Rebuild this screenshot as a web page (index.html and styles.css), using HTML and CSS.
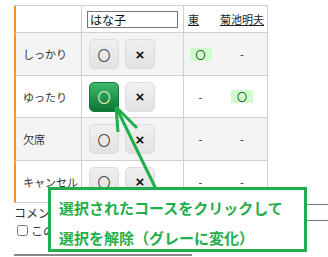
FILE: index.html
```html
<!DOCTYPE html>
<html lang="ja">
<head>
<meta charset="utf-8">
<link rel="stylesheet" href="styles.css">
</head>
<body>
<div class="page">
  <div class="grid">
    <div class="cell c1"></div>
    <div class="cell c2"><input class="name" type="text" value="はな子"></div>
    <div class="cell c3 head"><a href="#">東</a></div>
    <div class="cell c4 head"><a href="#">菊池明夫</a></div>

    <div class="cell c1 alt">しっかり</div>
    <div class="cell c2 alt"><span class="btn">〇</span><span class="btn x">×</span></div>
    <div class="cell c3 alt res"><span class="ok">〇</span></div>
    <div class="cell c4 alt res">-</div>

    <div class="cell c1">ゆったり</div>
    <div class="cell c2"><span class="btn on">〇</span><span class="btn x">×</span></div>
    <div class="cell c3 res">-</div>
    <div class="cell c4 res"><span class="ok">〇</span></div>

    <div class="cell c1 alt">欠席</div>
    <div class="cell c2 alt"><span class="btn">〇</span><span class="btn x">×</span></div>
    <div class="cell c3 alt res">-</div>
    <div class="cell c4 alt res">-</div>

    <div class="cell c1">キャンセル</div>
    <div class="cell c2"><span class="btn">〇</span><span class="btn x">×</span></div>
    <div class="cell c3 res">-</div>
    <div class="cell c4 res">-</div>
  </div>
  <div class="comment"><span class="lbl">コメント</span><input class="cinput" type="text"></div>
  <label class="check"><input type="checkbox">この</label>
  <div class="rule"></div>
</div>

<svg class="arrow" width="328" height="257" viewBox="0 0 328 257">
  <g stroke="#1fae4b" stroke-width="3" fill="none">
    <line x1="116" y1="107" x2="156" y2="189"/>
    <line x1="116" y1="107" x2="118" y2="132"/>
    <line x1="116" y1="107" x2="137" y2="128"/>
  </g>
</svg>
<div class="callout">
  <div>選択されたコースをクリックして</div>
  <div>選択を解除（グレーに変化）</div>
</div>
</body>
</html>
```
FILE: styles.css
```css
* { box-sizing: border-box; }
html, body {
  margin: 0;
  padding: 0;
  background: #fff;
  width: 328px;
  height: 257px;
  overflow: hidden;
  font-family: "Noto Sans CJK JP", "Noto Sans", sans-serif;
  color: #333;
  position: relative;
}
.page {
  padding: 5px 0 0 14px;
}
.grid {
  display: grid;
  grid-template-columns: 68px 102px 33px 51px;
  grid-template-rows: 27px 43px 42px 43px 42px;
  width: 254px;
  border-top: 1px solid #cfcfcf;
}
.cell {
  border-bottom: 1px solid #cfcfcf;
  display: flex;
  align-items: center;
  font-size: 11px;
}
.c1 {
  border-left: 2px solid #f7931e;
  border-right: 1px solid #cfcfcf;
  padding-left: 7px;
}
.c2 {
  border-right: 1px solid #cfcfcf;
  padding-left: 7px;
  gap: 6px;
}
.c4 { border-right: 1px solid #cfcfcf; }
.alt { background: #f4f4f4; }
.head { padding-left: 4px; font-size: 11px; }
.c4.head { padding-left: 3px; }
.head a { color: #222; text-decoration: underline; }
.name {
  margin-left: -2px;
  width: 91px;
  height: 17px;
  border: 1px solid #767676;
  padding: 0 2px;
  font-family: "Noto Sans CJK JP", sans-serif;
  font-size: 12px;
  color: #111;
  outline: none;
}
.btn {
  width: 30px;
  height: 30px;
  border-radius: 5px;
  border: 1px solid #dcdcdc;
  background: linear-gradient(#f0f0f0, #e2e2e2);
  display: flex;
  align-items: center;
  justify-content: center;
  font-size: 13px;
  color: #444;
}
.btn.x {
  font-family: "Liberation Sans", sans-serif;
  font-weight: bold;
  font-size: 15px;
  color: #111;
}
.btn.on {
  border-color: #127a3c;
  background: linear-gradient(#3fba6c, #0a7434);
  color: #e6f7c8;
}
.res {
  justify-content: center;
  font-size: 11px;
  color: #222;
}
.ok {
  background: #ccffcc;
  padding: 0 6px;
  line-height: 13px;
  font-size: 10px;
}
.comment {
  margin-top: 1px;
  display: flex;
  align-items: center;
  width: 314px;
  height: 17px;
  font-size: 12px;
}
.lbl {
  line-height: 17px;
  white-space: nowrap;
  flex-shrink: 0;
}
.cinput {
  flex: 1;
  min-width: 0;
  margin-left: 4px;
  height: 17px;
  border: 1px solid #767676;
  border-right: none;
}
.check {
  display: flex;
  align-items: center;
  height: 15px;
  margin-top: 2px;
  font-size: 12px;
}
.check input {
  width: 11px;
  height: 11px;
  margin: 0 3px 0 3px;
}
.rule {
  margin-top: 16px;
  width: 178px;
  border-top: 2px solid #8a8a8a;
}
.arrow {
  position: absolute;
  left: 0;
  top: 0;
}
.callout {
  position: absolute;
  left: 48px;
  top: 187px;
  width: 259px;
  height: 65px;
  border: 3px solid #1fae4b;
  background: #fff;
  padding: 3px 0 0 8px;
  color: #1fae4b;
  font-weight: bold;
  font-size: 15px;
  line-height: 30px;
  white-space: nowrap;
}
```
